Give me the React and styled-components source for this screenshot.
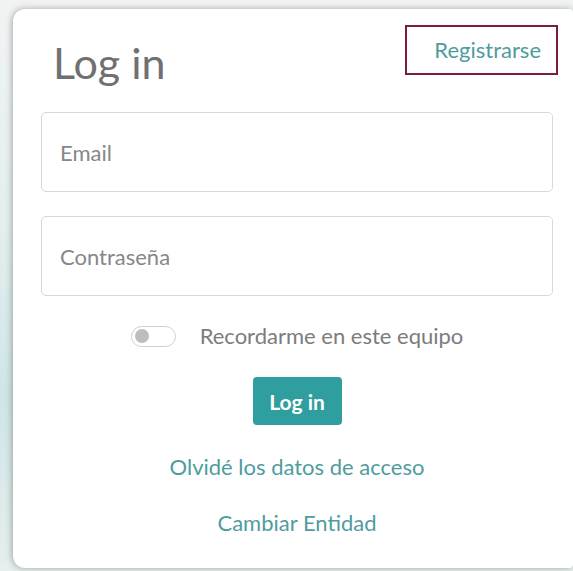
import styled, { createGlobalStyle } from "styled-components";

const GlobalStyle = createGlobalStyle`
  html, body {
    margin: 0;
    padding: 0;
    height: 100%;
    overflow: hidden;
  }
  body {
    font-family: Lato, "Open Sans", sans-serif;
    background: linear-gradient(180deg, #f1f3f3 0%, #e3eeee 40%, #cfe5e5 70%, #e6eeee 100%);
  }
`;

const Page = styled.main`
  display: flex;
  padding: 9px 0 0 13px;
  height: 100%;
  box-sizing: border-box;
`;

const Card = styled.section`
  flex: 1;
  height: 559px;
  box-sizing: border-box;
  background: #fff;
  border-radius: 12px 4px 4px 12px;
  box-shadow: -1px 0 6px rgba(0, 0, 0, 0.3);
  padding: 16px 20px 0 28px;
  display: flex;
  flex-direction: column;
  align-items: center;
`;

const Header = styled.header`
  align-self: stretch;
  display: flex;
  justify-content: space-between;
  align-items: flex-start;
  margin: 0 -5px 0 12px;
`;

const Title = styled.h1`
  margin: 13px 0 0;
  font-size: 43px;
  font-weight: 400;
  line-height: 50px;
  color: #707070;
`;

const RegisterLink = styled.a`
  display: block;
  width: 153px;
  height: 50px;
  box-sizing: border-box;
  border: 2px solid #7a1c3b;
  padding: 0 15px 0 0;
  text-align: right;
  font-size: 22px;
  line-height: 46px;
  color: #4f9c9e;
  text-decoration: none;
`;

const Input = styled.input`
  align-self: stretch;
  height: 80px;
  box-sizing: border-box;
  margin-top: 24px;
  border: 1px solid #d9d9d9;
  border-radius: 5px;
  padding: 0 18px;
  font-family: inherit;
  font-size: 22px;
  color: #555;
  outline: none;
  &::placeholder {
    color: #878787;
  }
`;

const RememberRow = styled.label`
  display: flex;
  align-items: center;
  gap: 24px;
  margin-top: 27px;
  font-size: 22px;
  line-height: 26px;
  color: #7c7c7c;
`;

const Toggle = styled.span`
  display: inline-flex;
  align-items: center;
  width: 45px;
  height: 21px;
  box-sizing: border-box;
  border: 1.5px solid #cfcfcf;
  border-radius: 11px;
  padding-left: 3px;
  &::before {
    content: "";
    width: 14px;
    height: 14px;
    border-radius: 50%;
    background: #bdbdbd;
  }
`;

const SubmitButton = styled.button`
  margin-top: 28px;
  width: 89px;
  height: 48px;
  border: none;
  border-radius: 4px;
  background: #2f9e9e;
  color: #fff;
  font-family: inherit;
  font-size: 21px;
  font-weight: 700;
`;

const TextLink = styled.a`
  margin-top: ${(p) => p.$gap}px;
  font-size: 22px;
  line-height: 26px;
  color: #4f9c9e;
  text-decoration: none;
`;

export default function App() {
  return (
    <>
      <GlobalStyle />
      <Page>
        <Card>
          <Header>
            <Title>Log in</Title>
            <RegisterLink href="#">Registrarse</RegisterLink>
          </Header>
          <Input type="email" placeholder="Email" />
          <Input type="password" placeholder="Contraseña" />
          <RememberRow>
            <Toggle />
            Recordarme en este equipo
          </RememberRow>
          <SubmitButton>Log in</SubmitButton>
          <TextLink $gap={29} href="#">Olvidé los datos de acceso</TextLink>
          <TextLink $gap={30} href="#">Cambiar Entidad</TextLink>
        </Card>
      </Page>
    </>
  );
}
